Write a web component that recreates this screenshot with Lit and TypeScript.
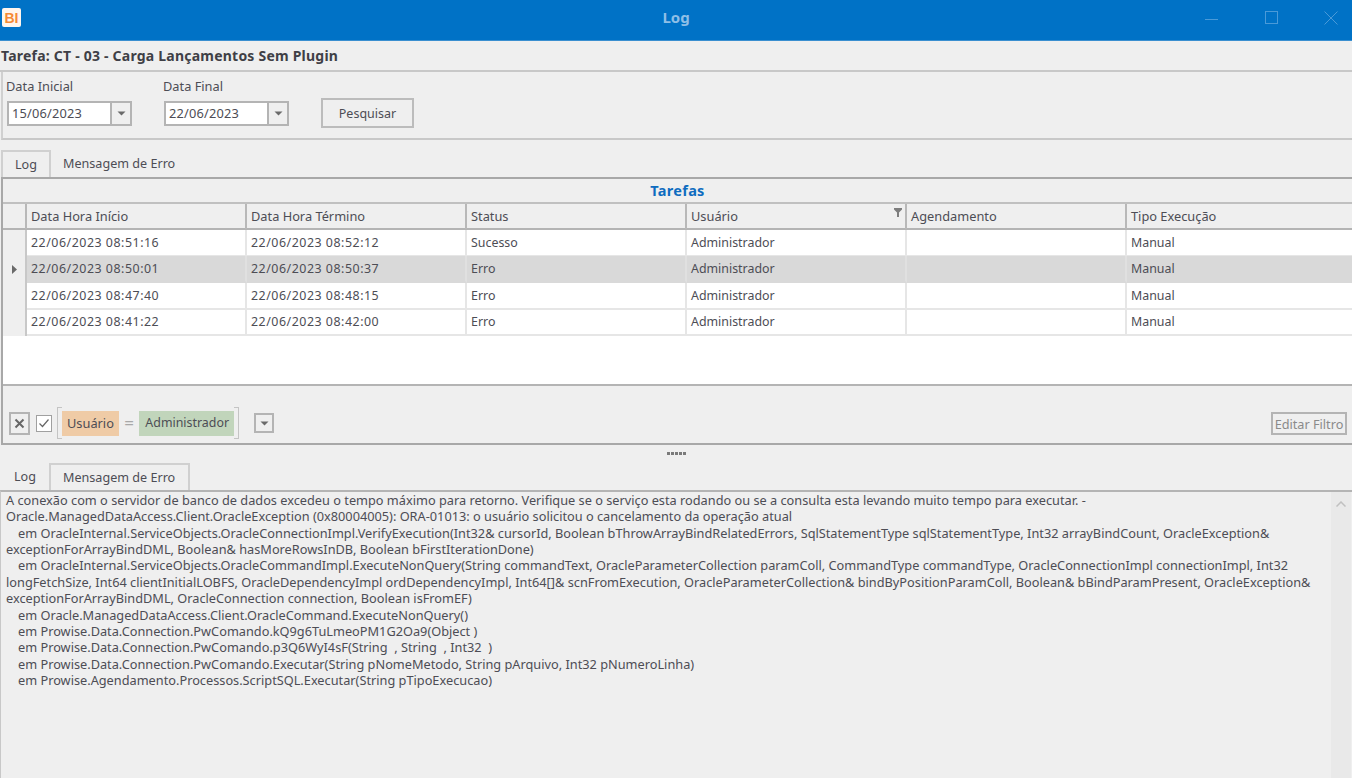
import { LitElement, html, css, svg } from "lit";
import { customElement } from "lit/decorators.js";

const COLS = ["Data Hora Início", "Data Hora Término", "Status", "Usuário", "Agendamento", "Tipo Execução"];
const ROWS = [
  ["22/06/2023 08:51:16", "22/06/2023 08:52:12", "Sucesso", "Administrador", "", "Manual"],
  ["22/06/2023 08:50:01", "22/06/2023 08:50:37", "Erro", "Administrador", "", "Manual"],
  ["22/06/2023 08:47:40", "22/06/2023 08:48:15", "Erro", "Administrador", "", "Manual"],
  ["22/06/2023 08:41:22", "22/06/2023 08:42:00", "Erro", "Administrador", "", "Manual"],
];
const MSG: [boolean, string][] = [
  [false, "A conexão com o servidor de banco de dados excedeu o tempo máximo para retorno. Verifique se o serviço esta rodando ou se a consulta esta levando muito tempo para executar. -"],
  [false, "Oracle.ManagedDataAccess.Client.OracleException (0x80004005): ORA-01013: o usuário solicitou o cancelamento da operação atual"],
  [true, "em OracleInternal.ServiceObjects.OracleConnectionImpl.VerifyExecution(Int32& cursorId, Boolean bThrowArrayBindRelatedErrors, SqlStatementType sqlStatementType, Int32 arrayBindCount, OracleException&"],
  [false, "exceptionForArrayBindDML, Boolean& hasMoreRowsInDB, Boolean bFirstIterationDone)"],
  [true, "em OracleInternal.ServiceObjects.OracleCommandImpl.ExecuteNonQuery(String commandText, OracleParameterCollection paramColl, CommandType commandType, OracleConnectionImpl connectionImpl, Int32"],
  [false, "longFetchSize, Int64 clientInitialLOBFS, OracleDependencyImpl ordDependencyImpl, Int64[]& scnFromExecution, OracleParameterCollection& bindByPositionParamColl, Boolean& bBindParamPresent, OracleException&"],
  [false, "exceptionForArrayBindDML, OracleConnection connection, Boolean isFromEF)"],
  [true, "em Oracle.ManagedDataAccess.Client.OracleCommand.ExecuteNonQuery()"],
  [true, "em Prowise.Data.Connection.PwComando.kQ9g6TuLmeoPM1G2Oa9(Object )"],
  [true, "em Prowise.Data.Connection.PwComando.p3Q6WyI4sF(String  , String  , Int32  )"],
  [true, "em Prowise.Data.Connection.PwComando.Executar(String pNomeMetodo, String pArquivo, Int32 pNumeroLinha)"],
  [true, "em Prowise.Agendamento.Processos.ScriptSQL.Executar(String pTipoExecucao)"],
];

const arrow = svg`<svg width="9" height="5" viewBox="0 0 9 5"><path d="M0.5 0.5H8.5L4.5 4.5Z" fill="#6a6a6a"/></svg>`;

@customElement("app-root")
export class AppRoot extends LitElement {
  static styles = css`
    :host { display: block; width: 1352px; height: 778px; overflow: hidden; background: #efefef;
      font-family: "Noto Sans", "Open Sans", sans-serif; font-size: 12.6px; color: #4d4d55; }
    * { box-sizing: border-box; }
    .titlebar { height: 41px; background: #0072c6; display: flex; align-items: center; position: relative; border-bottom: 1px solid #3a8fd0; }
    .logo { margin: -5px 0 0 2px; width: 19px; height: 19px; background: #fff6ee; border-radius: 2px; display: flex; align-items: center; justify-content: center;
      color: #f58a35; font: 700 14px "Liberation Sans", sans-serif; }
    .title { position: absolute; left: 0; right: 0; top: 8px; text-align: center; color: #8fbfe6; font-weight: 700; font-size: 15px; line-height: 18px; }
    .wctl { position: absolute; right: -7px; top: 0; display: flex; }
    .wctl svg { display: block; width: 60px; height: 36px; }
    .task { height: 31px; padding: 6px 0 0 1px; font-weight: 700; font-size: 14px; letter-spacing: 0.22px; line-height: 18px; color: #3f3f46; border-bottom: 2px solid #c8c8c8; }
    .filters { height: 68px; margin-left: 1px; border-left: 2px solid #d0d0d0; border-bottom: 2px solid #c8c8c8; display: flex; padding: 6px 0 0 3px; }
    .field { width: 157px; }
    .field label { display: block; height: 18px; line-height: 17px; font-size: 12.8px; }
    .combo { margin: 5px 0 0 1px; width: 125px; height: 25px; border: 2px solid #b4b4b4; display: flex; background: #fff; }
    .combo span { flex: 1; padding-left: 3px; line-height: 21px; font-size: 12.8px; letter-spacing: 0.2px; }
    .combo i { width: 20px; background: #efefef; border-left: 2px solid #b4b4b4; display: flex; align-items: center; justify-content: center; }
    .search { margin: 20px 0 0 1px; width: 93px; height: 30px; border: 2px solid #bcbcbc; text-align: center; line-height: 27px; font-size: 12.5px; }
    .tabs { display: flex; height: 27px; padding-left: 1px; font-size: 12.6px; }
    .tab { padding: 0 12px; line-height: 27px; height: 27px; }
    .tab.on { border: 2px solid #d0d0d0; border-bottom: none; background: #efefef; line-height: 26px; padding: 0 12px; }
    .top-tabs { margin-top: 10px; }
    .top-tabs .tab.on { width: 50px; }
    .grid { margin-left: 1px; height: 268px; border: 2px solid #a8a8a8; border-right: none; display: flex; flex-direction: column; }
    .band { height: 25px; text-align: center; color: #0e6cc0; font-weight: 700; font-size: 14.5px; letter-spacing: 0.3px; line-height: 22px; border-bottom: 2px solid #c0c0c0; }
    .row { display: grid; grid-template-columns: 24px repeat(5, 220px) 1fr; }
    .head { height: 26px; border-bottom: 2px solid #b4b4b4; font-size: 12.8px; }
    .head > div { border-right: 2px solid #b8b8b8; padding-left: 4px; line-height: 25px; position: relative; }
    .head > div:last-child { border-right: none; }
    .funnel { position: absolute; right: 3px; top: 4px; }
    .body { background: #fff; height: 154px; flex: none; font-size: 12.4px; }
    .data { height: 26.25px; }
    .data > div { border-right: 2px solid #e6e6e6; border-bottom: 2px solid #e6e6e6; padding-left: 4px; line-height: 25px; white-space: nowrap; }
    .data > div:first-child { background: #efefef; border-bottom: none; border-right: 2px solid #c8c8c8; padding: 0; display: flex; align-items: center; justify-content: center; }
    .data > div:last-child { border-right: none; }
    .data > div.stamp { letter-spacing: 0.52px; }
    .data.sel > div:not(:first-child) { background: #d9d9d9; border-bottom-color: #d9d9d9; }
    .data.sel > div:not(:first-child):not(:last-child) { border-right-color: #e0e0e0; }
    .filterbar { flex: 1; border-top: 2px solid #b4b4b4; display: flex; align-items: center; padding: 17px 5px 0 6px; }
    .fbtn { width: 21px; height: 23px; border: 2px solid #b4b4b4; display: flex; align-items: center; justify-content: center; }
    .chk { width: 16px; height: 17px; border: 1px solid #a0a0a0; background: #fff; margin-left: 6px; display: flex; align-items: center; justify-content: center; }
    .expr { margin-left: 5px; height: 32px; width: 182px; display: flex; align-items: center; padding: 0 4px 0 4px;
      border-left: 1px solid #c4c4c4; border-right: 1px solid #c4c4c4; position: relative; }
    .expr::before, .expr::after { content: ""; position: absolute; left: 0; right: 0; height: 1px;
      background: linear-gradient(90deg, #c4c4c4 4px, transparent 4px, transparent calc(100% - 4px), #c4c4c4 calc(100% - 4px)); }
    .expr::before { top: 0; } .expr::after { bottom: 0; }
    .pill { height: 25px; line-height: 24px; padding: 0 5px; white-space: nowrap; }
    .pill.a { background: #efcba6; width: 58px; font-size: 12.8px; }
    .pill.b { background: #c1d5bb; width: 95px; padding-left: 6px; font-size: 12.4px; }
    .eq { width: 21px; text-align: center; color: #a8a8a8; font-size: 17px; line-height: 24px; }
    .drop { margin-left: 15px; width: 20px; height: 20px; border: 2px solid #b4b4b4; display: flex; align-items: center; justify-content: center; }
    .edit { margin-left: auto; width: 76px; height: 23px; border: 2px solid #b4b4b4; text-align: center; line-height: 20px; color: #8a8a8a; font-size: 12.7px; white-space: nowrap; }
    .split { height: 18px; display: flex; justify-content: center; gap: 1px; padding-top: 7px; }
    .split b { width: 3px; height: 3px; background: #7a7a7a; }
    .bottom-tabs .tab:first-child { width: 48px; padding: 0 0 0 13px; }
    .bottom-tabs .tab.on { width: 141px; }
    .msgbox { height: 288px; border-top: 2px solid #b4b4b4; border-left: 1px solid #c8c8c8; display: flex; }
    .msg { flex: 1; padding: 0 0 0 5px; font-size: 12.76px; line-height: 16.36px; white-space: pre; overflow: hidden; }
    .msg .ind { padding-left: 12px; }
    .sb { width: 20px; margin-right: 1px; background: #e9e9e9; display: flex; justify-content: center; padding-top: 9px; flex: none; }
  `;

  render() {
    return html`
      <div class="titlebar">
        <div class="logo">BI</div>
        <div class="title">Log</div>
        <div class="wctl">
          <svg viewBox="0 0 60 36"><path d="M26 19.5H39" stroke="#4a9ad8" stroke-width="1"/></svg>
          <svg viewBox="0 0 60 36"><rect x="26.5" y="11.5" width="12" height="12" fill="none" stroke="#4a9ad8" stroke-width="1"/></svg>
          <svg viewBox="0 0 60 36"><path d="M25.5 11.5L38.5 24.5M38.5 11.5L25.5 24.5" stroke="#4a9ad8" stroke-width="1"/></svg>
        </div>
      </div>
      <div class="task">Tarefa: CT - 03 - Carga Lançamentos Sem Plugin</div>
      <div class="filters">
        <div class="field"><label>Data Inicial</label><div class="combo"><span>15/06/2023</span><i>${arrow}</i></div></div>
        <div class="field"><label>Data Final</label><div class="combo"><span>22/06/2023</span><i>${arrow}</i></div></div>
        <div class="search">Pesquisar</div>
      </div>
      <div class="tabs top-tabs"><div class="tab on">Log</div><div class="tab">Mensagem de Erro</div></div>
      <div class="grid">
        <div class="band">Tarefas</div>
        <div class="row head">
          <div></div>
          ${COLS.map((c) => html`<div>${c}${c === "Usuário" ? html`<svg class="funnel" width="8" height="9" viewBox="0 0 8 9"><path d="M0 0H8V1.5L5 4.5V9H3V4.5L0 1.5Z" fill="#7d7d7d"/></svg>` : ""}</div>`)}
        </div>
        <div class="body">
          ${ROWS.map((r, i) => html`<div class="row data ${i === 1 ? "sel" : ""}">
            <div>${i === 1 ? svg`<svg width="5" height="9" viewBox="0 0 5 9"><path d="M0 0L5 4.5L0 9Z" fill="#6a6a6a"/></svg>` : ""}</div>
            ${r.map((c, j) => html`<div class=${j < 2 ? "stamp" : ""}>${c}</div>`)}
          </div>`)}
        </div>
        <div class="filterbar">
          <div class="fbtn"><svg width="11" height="11" viewBox="0 0 11 11"><path d="M1.5 1.5L9.5 9.5M9.5 1.5L1.5 9.5" stroke="#666" stroke-width="2"/></svg></div>
          <div class="chk"><svg width="12" height="12" viewBox="0 0 12 12"><path d="M1.5 6.5L4.5 9.5L10.5 2.5" fill="none" stroke="#666" stroke-width="1.2"/></svg></div>
          <div class="expr"><div class="pill a">Usuário</div><div class="eq">=</div><div class="pill b">Administrador</div></div>
          <div class="drop">${arrow}</div>
          <div class="edit">Editar Filtro</div>
        </div>
      </div>
      <div class="split">${[0, 1, 2, 3, 4].map(() => html`<b></b>`)}</div>
      <div class="tabs bottom-tabs"><div class="tab">Log</div><div class="tab on">Mensagem de Erro</div></div>
      <div class="msgbox">
        <div class="msg">${MSG.map(([ind, t]) => html`<div class=${ind ? "ind" : ""}>${t}</div>`)}</div>
        <div class="sb"><svg width="10" height="6" viewBox="0 0 10 6"><path d="M0.5 5.5L5 1L9.5 5.5" fill="none" stroke="#c0c0c0" stroke-width="1.5"/></svg></div>
      </div>
    `;
  }
}
